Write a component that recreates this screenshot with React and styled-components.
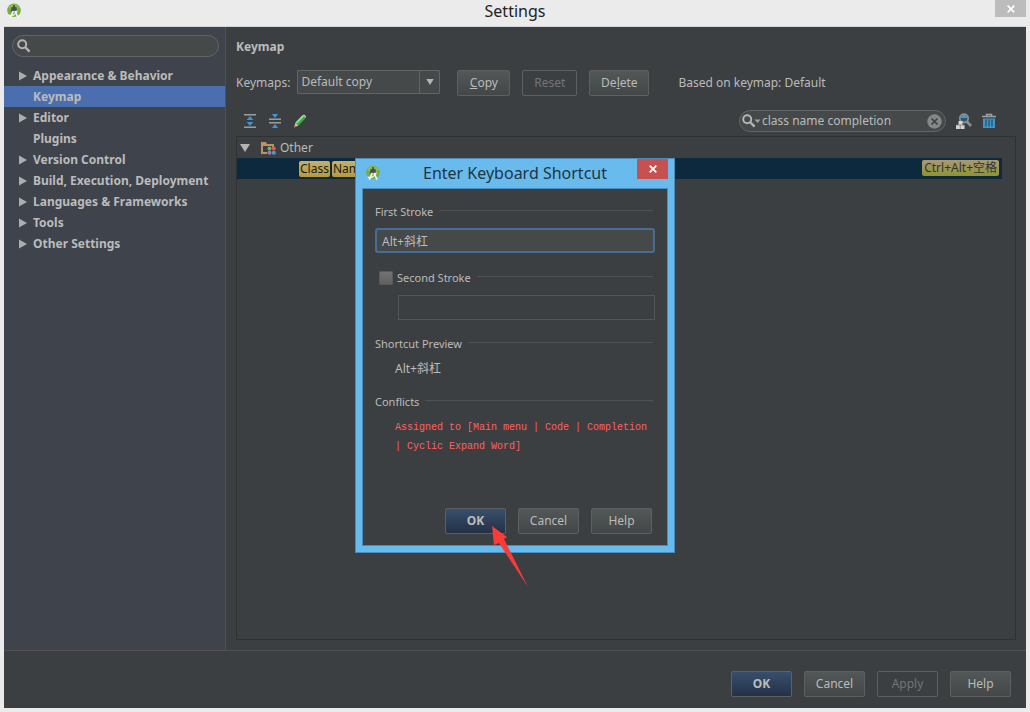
import React from "react";
import styled, { createGlobalStyle, css } from "styled-components";

const GlobalStyle = createGlobalStyle`
  *, *::before, *::after { box-sizing: border-box; }
  body { margin: 0; background: #ebebeb; }
  body, button, input, select {
    font-family: "Noto Sans", "Noto Sans CJK SC", sans-serif;
    font-size: 12px;
    line-height: 16px;
    color: #bbbbbb;
  }
  svg { display: block; flex: none; }
`;

const Window = styled.div`
  display: flex;
  flex-direction: column;
  min-height: 100vh;
  padding: 0 4px 4px;
  background: #ebebeb;
`;

const TitleBar = styled.header`
  display: grid;
  grid-template-columns: 1fr auto 1fr;
  align-items: start;
  height: 27px;
  border-bottom: 1px solid #d4d4d4;
`;

const AppIcon = styled.div`
  padding: 3px 2px;
`;

const WindowTitle = styled.h1`
  margin: 0;
  font-size: 16px;
  line-height: 22px;
  font-weight: 400;
  color: #222222;
`;

const CloseButton = styled.button`
  display: flex;
  align-items: center;
  justify-content: center;
  justify-self: end;
  width: 31px;
  height: ${(p) => (p.$danger ? 20 : 17)}px;
  padding: 0;
  border: 0;
  background: ${(p) => (p.$danger ? "#c75050" : "#bcbcbc")};
`;

const Content = styled.div`
  display: flex;
  flex: 1;
  background: #3c3f41;
`;

const Sidebar = styled.nav`
  flex: none;
  width: 222px;
  padding-top: 8px;
  background: #3f434c;
  border-right: 1px solid #515151;
`;

const SearchBox = styled.div`
  display: flex;
  align-items: center;
  gap: 2px;
  height: 22px;
  padding: 0 4px;
  background: #45494a;
  border: 1px solid #646464;
  border-radius: 11px;
`;

const SidebarSearch = styled(SearchBox)`
  margin: 0 6px 8px 8px;
`;

const ToolbarSearch = styled(SearchBox)`
  width: 207px;
  margin: 0 10px 0 auto;
  padding: 0 3px 0 2px;
  gap: 1px;
`;

const SearchInput = styled.input`
  flex: 1;
  min-width: 0;
  padding: 0;
  border: 0;
  outline: 0;
  background: transparent;
`;

const IconButton = styled.button`
  display: flex;
  padding: 0;
  border: 0;
  background: none;
`;

const NavList = styled.ul`
  margin: 0;
  padding: 0;
  list-style: none;
`;

const NavLink = styled.a`
  display: flex;
  align-items: center;
  height: 21px;
  padding-left: 15px;
  gap: 6px;
  font-size: 12px;
  font-weight: 700;
  white-space: nowrap;
  color: #bbbbbb;
  text-decoration: none;
  background: ${(p) => (p.$active ? "#4b6eaf" : "transparent")};
`;

const ArrowSlot = styled.span`
  display: flex;
  width: 8px;
`;

const Main = styled.main`
  display: flex;
  flex: 1;
  flex-direction: column;
  min-width: 0;
  padding: 12px 10px 10px;
`;

const PageTitle = styled.h2`
  margin: 0 0 15px;
  font-size: 12px;
  line-height: 16px;
  font-weight: 700;
`;

const KeymapRow = styled.div`
  display: flex;
  align-items: center;
  height: 26px;
  font-size: 12px;
`;

const SelectBox = styled.div`
  position: relative;
  width: 143px;
  height: 24px;
  margin: 0 17px 2px 7px;
`;

const Select = styled.select`
  appearance: none;
  width: 100%;
  height: 100%;
  padding: 0 24px 1px 3px;
  border: 1px solid #646464;
  border-radius: 1px;
  background: #45494a;
  font-size: 12px;
`;

const SelectArrow = styled.span`
  position: absolute;
  top: 1px;
  right: 1px;
  bottom: 1px;
  display: flex;
  align-items: center;
  justify-content: center;
  width: 20px;
  border-left: 1px solid #646464;
  pointer-events: none;
`;

const Button = styled.button`
  height: 26px;
  width: ${(p) => p.$width || 61}px;
  padding: 0;
  border: 1px solid #5e6060;
  border-radius: 2px;
  background: linear-gradient(#525758, #434748);
  font-size: 12px;
  ${(p) =>
    p.$primary &&
    css`
      background: linear-gradient(#374f6d, #243146);
      font-weight: 700;
    `}
  &:disabled {
    background: none;
    color: #747474;
  }
`;

const ButtonGroup = styled.div`
  display: flex;
  gap: 12px;
`;

const BasedOn = styled.span`
  margin-left: 29px;
`;

const Toolbar = styled.div`
  display: flex;
  align-items: center;
  height: 22px;
  margin: 14px 0 4px;
  padding: 0 19px 0 6px;
`;

const ToolGroup = styled.div`
  display: flex;
  align-items: center;
  gap: 9px;
`;

const Tree = styled.div`
  flex: 1;
  border: 1px solid #2f3132;
`;

const TreeRow = styled.div`
  display: flex;
  align-items: center;
  height: 21px;
  margin-right: 13px;
  font-size: 12px;
  ${(p) =>
    p.$selected &&
    css`
      padding: 0 3px 0 62px;
      background: #0d293e;
    `}
`;

const FolderIcon = styled.span`
  margin: 0 4px 0 10px;
`;

const Chip = styled.mark`
  height: 16px;
  margin-right: 2px;
  padding: 0 1px;
  border-radius: 2px;
  background: linear-gradient(#c4b16b, #b59a3f);
  line-height: 16px;
  color: #1c1c1c;
`;

const ShortcutChip = styled(Chip)`
  margin: 0 0 1px auto;
  padding: 0 2px;
  background: linear-gradient(#a99a77, #8d9433);
  color: #333333;
`;

const Footer = styled.footer`
  display: flex;
  justify-content: flex-end;
  padding: 20px 15px 11px;
  background: #3c3f41;
  border-top: 1px solid #515151;
`;

const Overlay = styled.div`
  position: fixed;
  inset: 0;
  display: flex;
  align-items: center;
  justify-content: center;
  padding-bottom: 1px;
`;

const Dialog = styled.section`
  position: relative;
  width: 320px;
  padding: 0 6px 6px;
  border: 1px solid #4a8dba;
  background: #69bbee;
`;

const DialogBar = styled.header`
  display: grid;
  grid-template-columns: 1fr auto 1fr;
  align-items: start;
  height: 29px;
`;

const DialogIcon = styled.div`
  padding: 6px 3px;
`;

const DialogTitle = styled.h2`
  margin: 0;
  font-size: 16px;
  line-height: 28px;
  font-weight: 400;
  color: #1f3442;
`;

const DialogBody = styled.div`
  padding: 14px 12px 11px;
  border: 1px solid #4a8dba;
  background: #3c3f41;
`;

const SectionHead = styled.div`
  display: flex;
  align-items: center;
  gap: 6px;
  height: 18px;
  margin-right: 2px;
  font-size: 11px;
  &::after {
    content: "";
    flex: 1;
    margin-bottom: 3px;
    border-top: 1px solid #515151;
  }
`;

const StrokeInput = styled.input`
  display: block;
  width: 280px;
  height: 25px;
  margin: 7px 0 16px;
  padding: 0 5px;
  border: 2px solid #466d94;
  border-radius: 3px;
  outline: 0;
  background: #45494a;
`;

const SecondInput = styled.input`
  display: block;
  width: 257px;
  height: 25px;
  margin: 8px 0 15px 23px;
  padding: 0 5px;
  border: 1px solid #555555;
  background: #3c3f41;
`;

const Checkbox = styled.input`
  appearance: none;
  width: 14px;
  height: 14px;
  margin: 0 0 1px 4px;
  border: 1px solid #5a5a5a;
  border-radius: 1px;
  background: linear-gradient(#737373, #606060);
`;

const CheckLabel = styled.label`
  display: flex;
  align-items: center;
  gap: 4px;
`;

const Preview = styled.p`
  margin: 7px 0 15px 20px;
  line-height: 18px;
`;

const Conflict = styled.p`
  margin: 7px 0 52px 20px;
  font-family: "Liberation Mono", monospace;
  font-size: 10px;
  line-height: 19px;
  color: #ff5f5f;
`;

const DialogButtons = styled(ButtonGroup)`
  justify-content: flex-end;
  padding-right: 3px;
`;

const Pointer = styled.svg`
  position: absolute;
  left: 136px;
  bottom: -36px;
  pointer-events: none;
`;

const StudioLogo = () => (
  <svg width="16" height="16" viewBox="0 0 16 16" aria-hidden="true">
    <circle cx="8" cy="7.2" r="6.8" fill="#74ad42" />
    <path d="M2 4.5A6.8 6.8 0 0 1 14 4.5L11 7H5z" fill="#8abd55" />
    <path d="M7 2h2v2h1.5l1 4.5h-7l1-4.5H7z" fill="#56595a" />
    <circle cx="8" cy="5.6" r="1.9" fill="#4c4f52" />
    <path d="M7.3 8 4.2 14.6M8.9 8l3.2 6.6" stroke="#f4f4f4" strokeWidth="1.7" fill="none" />
    <path d="M2.8 12.2c3.4 1.2 7-.6 8.6-4.6" stroke="#f4f4f4" strokeWidth="1.3" fill="none" />
  </svg>
);

const Cross = () => (
  <svg width="8" height="8" viewBox="0 0 8 8" aria-hidden="true">
    <path d="M.7.7l6.6 6.6M7.3.7.7 7.3" stroke="#fff" strokeWidth="1.7" />
  </svg>
);

const Magnifier = ({ menu }) => (
  <svg width={menu ? 19 : 14} height="14" viewBox={`0 0 ${menu ? 19 : 14} 14`} aria-hidden="true">
    <circle cx="5.2" cy="5.2" r="4" fill="none" stroke="#b4b4b4" strokeWidth="2" />
    <path d="M8 8l4.6 4.6" stroke="#b4b4b4" strokeWidth="2.4" />
    {menu && <path d="M12.5 5.4h6l-3 3.6z" fill="#a0a0a0" />}
  </svg>
);

const RightArrow = () => (
  <svg width="8" height="10" viewBox="0 0 8 10" aria-hidden="true">
    <path d="M0 .5 8 5 0 9.5z" fill="#adadad" />
  </svg>
);

const DownArrow = ({ size = 10 }) => (
  <svg width={size} height={size - 2} viewBox="0 0 10 8" aria-hidden="true">
    <path d="M0 0h10L5 8z" fill="#b4b4b4" />
  </svg>
);

const ExpandIcon = () => (
  <svg width="16" height="16" viewBox="0 0 16 16" aria-hidden="true">
    <path d="M2 1h12v1.5H2zM2 13.5h12V15H2z" fill="#9a9da0" />
    <path d="M8 3l3.4 4H4.600zM8 13l3.400-4H4.600z" fill="#4295cc" />
  </svg>
);

const CollapseIcon = () => (
  <svg width="16" height="16" viewBox="0 0 16 16" aria-hidden="true">
    <path d="M2 5.5h12v1.5H2zM2 9h12v1.500H2z" fill="#9a9da0" />
    <path d="M8 5L4.800 1h6.400zM8 11l-3.200 4h6.400z" fill="#4295cc" />
  </svg>
);

const PencilIcon = () => (
  <svg width="16" height="16" viewBox="0 0 16 16" aria-hidden="true">
    <path d="M2 14.500l1.500-5 3 3z" fill="#e3b887" />
    <path d="M2 14.500l.7-2.200 1.300 1.300z" fill="#a56b48" />
    <path d="M3.500 9.500l7.200-7.400 3 3-7.200 7.400z" fill="#3fa650" />
    <path d="M3.500 9.500l7.200-7.400 1.300 1.300-7.200 7.400z" fill="#8be08d" />
    <path d="M10.700 2.100c1.600-1.400 4.100 1 3 3z" fill="#a9dba8" />
  </svg>
);

const FolderSvg = () => (
  <svg width="16" height="14" viewBox="0 0 16 14" aria-hidden="true">
    <path d="M1 1h5l1 2h7v3h-2V5H3v6h4v2H1z" fill="#bd9160" />
    <circle cx="9.500" cy="7.500" r="2" fill="#5fbd5f" />
    <circle cx="13.800" cy="7.500" r="2" fill="#e85a4c" />
    <circle cx="9.500" cy="11.700" r="2" fill="#a773c4" />
    <circle cx="13.800" cy="11.700" r="2" fill="#4d9ed0" />
  </svg>
);

const ClearIcon = () => (
  <svg width="15" height="15" viewBox="0 0 15 15" aria-hidden="true">
    <circle cx="7.5" cy="7.5" r="7.2" fill="#85888a" />
    <path d="M4.500 4.500l6 6M10.500 4.500l-6 6" stroke="#3e4142" strokeWidth="1.7" />
  </svg>
);

const FindShortcutIcon = () => (
  <svg width="16" height="16" viewBox="0 0 16 16" aria-hidden="true">
    <circle cx="8" cy="5.300" r="4.200" fill="#2b5672" stroke="#8c8f91" strokeWidth="1.8" />
    <path d="M4.800 5a3.200 3.200 0 0 1 6.400 0z" fill="#4698c8" />
    <path d="M10.800 8.500l4.200 4.500" stroke="#8c8f91" strokeWidth="2.6" />
    <path d="M2.500 8h4v4h2v4H0v-4h2.500z" fill="#d4d4d4" />
    <path d="M0 12h8.500M4.300 12v4" stroke="#777" strokeWidth=".7" />
  </svg>
);

const TrashIcon = () => (
  <svg width="16" height="16" viewBox="0 0 16 16" aria-hidden="true">
    <path d="M5.500 3V1.500h5V3M1 3.500h14" fill="none" stroke="#9fa2a4" strokeWidth="1.5" />
    <path d="M2 5.500h12V15H2z" fill="#3e96c8" />
    <path d="M5 6.500v7M8 6.500v7M11 6.500v7" stroke="#244e68" strokeWidth="1.2" />
  </svg>
);

const sections = [
  { name: "Appearance & Behavior", children: true },
  { name: "Keymap", active: true },
  { name: "Editor", children: true },
  { name: "Plugins" },
  { name: "Version Control", children: true },
  { name: "Build, Execution, Deployment", children: true },
  { name: "Languages & Frameworks", children: true },
  { name: "Tools", children: true },
  { name: "Other Settings", children: true },
];

function SettingsNav() {
  return (
    <Sidebar aria-label="Settings sections">
      <SidebarSearch>
        <Magnifier />
        <SearchInput type="text" aria-label="Search settings" />
      </SidebarSearch>
      <NavList>
        {sections.map((s) => (
          <li key={s.name}>
            <NavLink href="#" $active={s.active} aria-current={s.active ? "page" : undefined}>
              <ArrowSlot>{s.children && <RightArrow />}</ArrowSlot>
              {s.name}
            </NavLink>
          </li>
        ))}
      </NavList>
    </Sidebar>
  );
}

function KeymapPage() {
  return (
    <Main>
      <PageTitle>Keymap</PageTitle>
      <KeymapRow>
        <label htmlFor="keymap">Keymaps:</label>
        <SelectBox>
          <Select id="keymap">
            <option>Default copy</option>
          </Select>
          <SelectArrow>
            <DownArrow size={8} />
          </SelectArrow>
        </SelectBox>
        <ButtonGroup>
          <Button type="button" $width={53}><u>C</u>opy</Button>
          <Button type="button" $width={55} disabled>Reset</Button>
          <Button type="button" $width={60}>De<u>l</u>ete</Button>
        </ButtonGroup>
        <BasedOn>Based on keymap: Default</BasedOn>
      </KeymapRow>
      <Toolbar>
        <ToolGroup>
          <IconButton type="button" aria-label="Expand all"><ExpandIcon /></IconButton>
          <IconButton type="button" aria-label="Collapse all"><CollapseIcon /></IconButton>
          <IconButton type="button" aria-label="Edit shortcut"><PencilIcon /></IconButton>
        </ToolGroup>
        <ToolbarSearch>
          <Magnifier menu />
          <SearchInput type="text" aria-label="Search actions" defaultValue="class name completion" />
          <IconButton type="button" aria-label="Clear search"><ClearIcon /></IconButton>
        </ToolbarSearch>
        <ToolGroup>
          <IconButton type="button" aria-label="Find by shortcut"><FindShortcutIcon /></IconButton>
          <IconButton type="button" aria-label="Delete"><TrashIcon /></IconButton>
        </ToolGroup>
      </Toolbar>
      <Tree>
        <TreeRow>
          <FolderToggle />
          <FolderIcon><FolderSvg /></FolderIcon>
          Other
        </TreeRow>
        <TreeRow $selected>
          <Chip>Class</Chip>
          <Chip>Name</Chip>
          <ShortcutChip>Ctrl+Alt+空格</ShortcutChip>
        </TreeRow>
      </Tree>
    </Main>
  );
}

const ToggleButton = styled(IconButton)`
  margin-left: 3px;
`;

const FolderToggle = () => (
  <ToggleButton type="button" aria-label="Collapse group">
    <DownArrow />
  </ToggleButton>
);

function ShortcutDialog() {
  return (
    <Overlay>
      <Dialog role="dialog" aria-labelledby="dialog-title">
        <DialogBar>
          <DialogIcon><StudioLogo /></DialogIcon>
          <DialogTitle id="dialog-title">Enter Keyboard Shortcut</DialogTitle>
          <CloseButton type="button" aria-label="Close dialog" $danger><Cross /></CloseButton>
        </DialogBar>
        <DialogBody>
          <SectionHead><label htmlFor="first-stroke">First Stroke</label></SectionHead>
          <StrokeInput id="first-stroke" type="text" defaultValue="Alt+斜杠" />
          <SectionHead>
            <CheckLabel>
              <Checkbox type="checkbox" />
              Second Stroke
            </CheckLabel>
          </SectionHead>
          <SecondInput type="text" aria-label="Second stroke keys" disabled />
          <SectionHead>Shortcut Preview</SectionHead>
          <Preview>Alt+斜杠</Preview>
          <SectionHead>Conflicts</SectionHead>
          <Conflict>Assigned to [Main menu | Code | Completion | Cyclic Expand Word]</Conflict>
          <DialogButtons>
            <Button type="button" $primary>OK</Button>
            <Button type="button">Cancel</Button>
            <Button type="button">Help</Button>
          </DialogButtons>
        </DialogBody>
        <Pointer width="37" height="62" viewBox="0 0 37 62" aria-hidden="true">
          <path d="M0 0l15 11-3 2L36 61 7 17l-5 2z" fill="#fb3b38" />
        </Pointer>
      </Dialog>
    </Overlay>
  );
}

export default function App() {
  return (
    <>
      <GlobalStyle />
      <Window>
        <TitleBar>
          <AppIcon><StudioLogo /></AppIcon>
          <WindowTitle>Settings</WindowTitle>
          <CloseButton type="button" aria-label="Close window"><Cross /></CloseButton>
        </TitleBar>
        <Content>
          <SettingsNav />
          <KeymapPage />
        </Content>
        <Footer>
          <ButtonGroup>
            <Button type="button" $primary>OK</Button>
            <Button type="button">Cancel</Button>
            <Button type="button" disabled>Apply</Button>
            <Button type="button">Help</Button>
          </ButtonGroup>
        </Footer>
      </Window>
      <ShortcutDialog />
    </>
  );
}
